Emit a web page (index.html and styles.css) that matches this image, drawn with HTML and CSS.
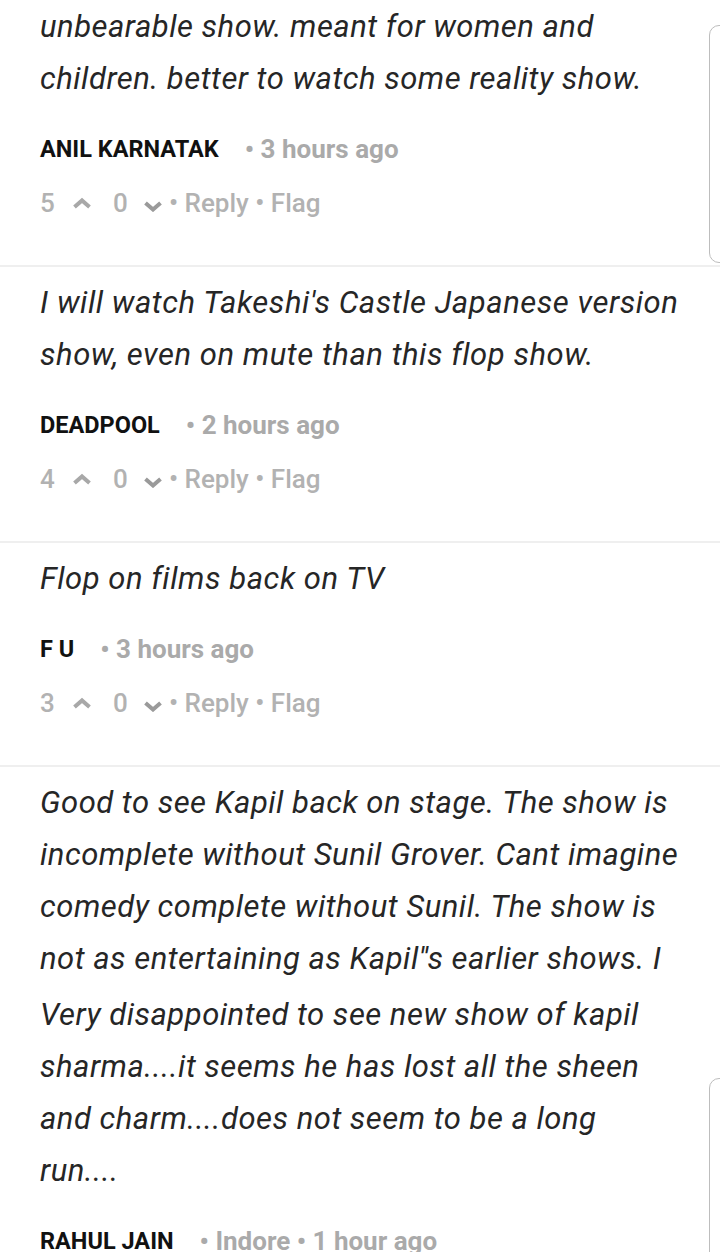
FILE: index.html
```html
<!DOCTYPE html>
<html lang="en">
<head>
<meta charset="utf-8">
<title>Comments</title>
<link rel="stylesheet" href="styles.css">
</head>
<body>
<div class="list">
  <div class="comment first">
    <p class="text narrow">unbearable show. meant for women and<br>children. better to watch some reality show.</p>
    <div class="meta"><span class="name">ANIL KARNATAK</span><span class="time">• 3 hours ago</span></div>
    <div class="votes">
      <span class="num">5</span>
      <svg class="chev" viewBox="0 0 20 12" width="20" height="12"><polyline points="2.5,10 10,3.5 17.5,10"/></svg>
      <span class="num zero">0</span>
      <svg class="chev down" viewBox="0 0 20 12" width="20" height="12"><polyline points="2.5,3 10,9.5 17.5,3"/></svg>
      <span class="act">• Reply • Flag</span>
    </div>
  </div>
  <div class="comment">
    <p class="text">I will watch Takeshi's Castle Japanese version<br>show, even on mute than this flop show.</p>
    <div class="meta"><span class="name">DEADPOOL</span><span class="time">• 2 hours ago</span></div>
    <div class="votes">
      <span class="num">4</span>
      <svg class="chev" viewBox="0 0 20 12" width="20" height="12"><polyline points="2.5,10 10,3.5 17.5,10"/></svg>
      <span class="num zero">0</span>
      <svg class="chev down" viewBox="0 0 20 12" width="20" height="12"><polyline points="2.5,3 10,9.5 17.5,3"/></svg>
      <span class="act">• Reply • Flag</span>
    </div>
  </div>
  <div class="comment">
    <p class="text">Flop on films back on TV</p>
    <div class="meta"><span class="name">F U</span><span class="time">• 3 hours ago</span></div>
    <div class="votes">
      <span class="num">3</span>
      <svg class="chev" viewBox="0 0 20 12" width="20" height="12"><polyline points="2.5,10 10,3.5 17.5,10"/></svg>
      <span class="num zero">0</span>
      <svg class="chev down" viewBox="0 0 20 12" width="20" height="12"><polyline points="2.5,3 10,9.5 17.5,3"/></svg>
      <span class="act">• Reply • Flag</span>
    </div>
  </div>
  <div class="comment last">
    <p class="text narrow">Good to see Kapil back on stage. The show is<br>incomplete without Sunil Grover. Cant imagine<br>comedy complete without Sunil. The show is<br>not as entertaining as Kapil''s earlier shows. I</p>
    <p class="text narrow second">Very disappointed to see new show of kapil<br>sharma....it seems he has lost all the sheen<br>and charm....does not seem to be a long<br>run....</p>
    <div class="meta"><span class="name">RAHUL JAIN</span><span class="time">• Indore • 1 hour ago</span></div>
  </div>
</div>
<div class="edge edge-top"></div>
<div class="edge edge-bottom"></div>
</body>
</html>
```

FILE: styles.css
```css
html, body {
  margin: 0;
  padding: 0;
  background: #ffffff;
}
body {
  font-family: Roboto, "Noto Sans", sans-serif;
  width: 720px;
  height: 1252px;
  overflow: hidden;
  position: relative;
}
.list {
  display: flex;
  flex-direction: column;
}
.comment {
  padding: 10px 0 47px 40px;
  border-bottom: 2px solid #efefef;
}
.comment.first {
  padding-top: 1px;
}
.comment.last {
  border-bottom: none;
}
.text {
  margin: 0;
  font-style: italic;
  font-size: 31px;
  line-height: 52px;
  color: #262626;
  white-space: nowrap;
  letter-spacing: 0.55px;
}
.text.narrow {
  letter-spacing: 0.5px;
}
.text.second {
  margin-top: 4px;
}
.meta {
  margin-top: 29px;
  height: 30px;
  line-height: 30px;
  display: flex;
  align-items: center;
  gap: 26px;
}
.name {
  font-weight: 700;
  font-size: 23.5px;
  color: #111;
}
.time {
  font-weight: 700;
  font-size: 26px;
  color: #aaaaaa;
}
.votes {
  margin-top: 24px;
  height: 30px;
  line-height: 30px;
  display: flex;
  align-items: center;
  color: #b2b2b2;
  font-size: 26px;
  font-weight: 500;
}
.num {
  width: 14px;
}
.chev {
  margin-left: 18px;
  fill: none;
  stroke: #a8a8a8;
  stroke-width: 4;
  stroke-linecap: butt;
  stroke-linejoin: miter;
}
.chev.down {
  margin-top: 6px;
  margin-left: 16px;
  stroke: #9a9a9a;
}
.zero {
  margin-left: 21px;
}
.act {
  margin-left: 6px;
}
.edge {
  position: absolute;
  left: 709px;
  width: 30px;
  border: 1px solid #bdbdbd;
  border-radius: 10px;
}
.edge-top {
  top: 25px;
  height: 236px;
}
.edge-bottom {
  top: 1078px;
  height: 300px;
}
```
